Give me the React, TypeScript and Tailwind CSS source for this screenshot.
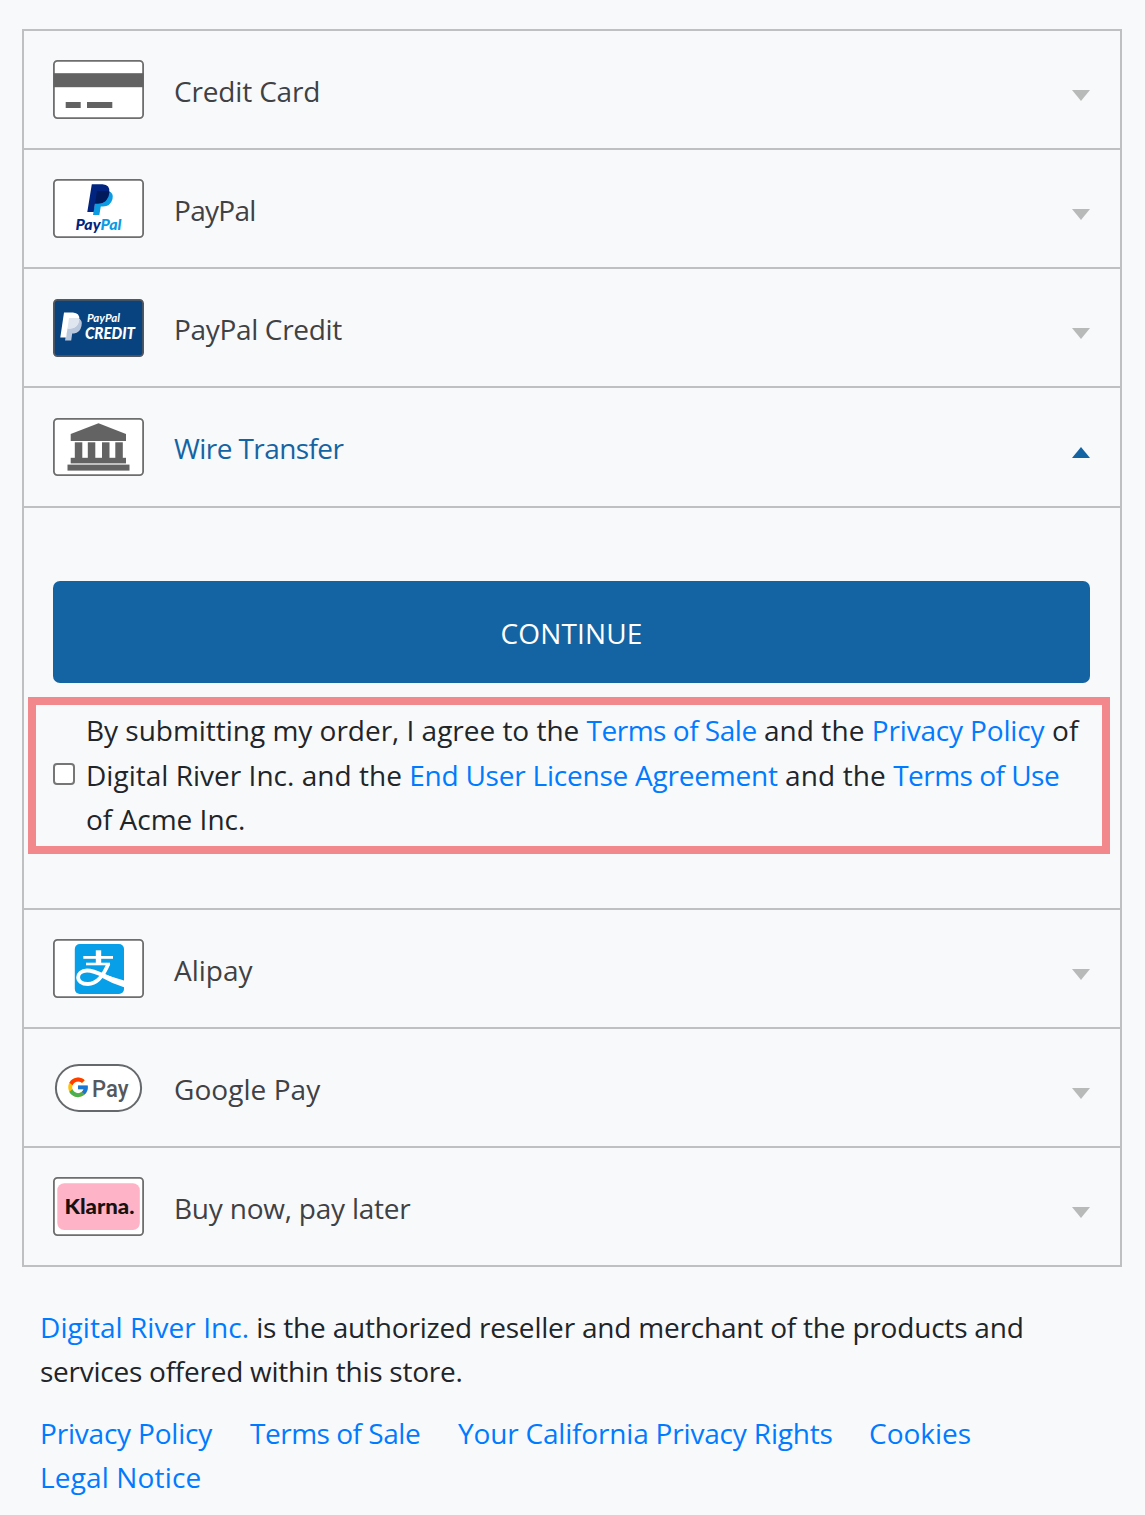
import type { ReactNode } from 'react';
import { FcGoogle } from 'react-icons/fc';

function CardFrame({ fill = '#ffffff', stroke = '#6e6e6e', h = 59, children }: { fill?: string; stroke?: string; h?: number; children: ReactNode }) {
  return (
    <svg width="91" height={h} viewBox={`0 0 91 ${h}`} className="block shrink-0">
      <rect x="0.9" y="0.9" width="89.2" height={h - 1.8} rx="3.5" fill={fill} stroke={stroke} strokeWidth="1.8" />
      {children}
    </svg>
  );
}

function CreditCardIcon() {
  return (
    <CardFrame>
      <g fill="#626262">
        <rect x="0.5" y="13.2" width="90" height="14" />
        <rect x="12.7" y="42" width="15" height="6" />
        <rect x="34" y="42" width="25.3" height="6" />
      </g>
    </CardFrame>
  );
}

function PayPalIcon() {
  return (
    <CardFrame>
      <path d="M44 12H55.5Q61 14 59.5 20Q57.5 27.5 50 27.5H47.8L46.3 36H40Z" fill="#0a9be3" />
      <path d="M38.8 5.3H49.5Q57.3 5.8 56.3 13.5Q55 24.5 45 24.5H42L40.7 33H34.3Z" fill="#00247f" />
      <path d="M44 12H55.9Q56.5 13 56.3 13.8Q54.8 24.5 45 24.5H42Z" fill="#001a5c" />
      <text x="22.5" y="51" textLength="46" lengthAdjust="spacingAndGlyphs" className="font-['Lato'] text-[14.5px] font-black italic">
        <tspan fill="#00247f">Pay</tspan>
        <tspan fill="#0a9be3">Pal</tspan>
      </text>
    </CardFrame>
  );
}

function PayPalCreditIcon() {
  return (
    <CardFrame fill="#08427f" stroke="#54585e" h={58}>
      <path d="M16 19H25Q30 21 28.5 27Q27 34 21 34.5H19.2L18.2 41.5H12Z" fill="#b9c8dc" />
      <path d="M11 13.5H20Q27 14 26.2 20.5Q25 29.5 17 29.5H14.5L13.2 38.5H7.3Z" fill="#ffffff" />
      <path d="M16 19H25.8Q26.4 20 26.2 21Q25 29.5 17 29.5H14.5Z" fill="#dfe6ef" />
      <g fill="#ffffff">
        <text x="34" y="22.5" textLength="33" lengthAdjust="spacingAndGlyphs" className="font-['Lato'] text-[11px] font-bold italic">PayPal</text>
        <text x="32" y="39.8" textLength="50" lengthAdjust="spacingAndGlyphs" className="font-['Lato'] text-[17px] font-black italic">CREDIT</text>
      </g>
    </CardFrame>
  );
}

function BankIcon() {
  return (
    <CardFrame h={58}>
      <g fill="#636363">
        <path d="M45.5 5.3L73 16V23H17.7V16Z" />
        <rect x="21.8" y="24.3" width="7.5" height="16" />
        <rect x="34.8" y="24.3" width="7.5" height="16" />
        <rect x="49" y="24.3" width="7.5" height="16" />
        <rect x="62.3" y="24.3" width="7.5" height="16" />
        <rect x="17.7" y="39.8" width="55.3" height="5.6" />
        <rect x="14.5" y="46.6" width="62" height="6" />
      </g>
    </CardFrame>
  );
}

function AlipayIcon() {
  return (
    <CardFrame>
      <rect x="21.8" y="5" width="49.2" height="50" rx="5" fill="#069fe8" />
      <g fill="none" stroke="#ffffff">
        <path d="M45.5 11.3V25" strokeWidth="5.4" />
        <path d="M30.3 18.4H60" strokeWidth="2.8" />
        <path d="M33 25H57" strokeWidth="2.6" />
        <path d="M55.5 24.5C52 33 46 45 35 45C21.5 45 22.5 31.5 34 31.5C43 31.5 50 37 60 40.5" strokeWidth="3.8" />
      </g>
      <path d="M50 34.5Q60 38.5 71 41.5V48.3Q59 44.5 48 38.2Z" fill="#ffffff" />
    </CardFrame>
  );
}

function GooglePayIcon() {
  return (
    <svg width="91" height="50" viewBox="0 0 91 50" className="block shrink-0">
      <rect x="2.9" y="1.9" width="85.2" height="46" rx="23" fill="#ffffff" stroke="#66696c" strokeWidth="2" />
      <FcGoogle x="13.3" y="12.6" size={23.5} />
      <text x="39" y="33.5" textLength="36.5" lengthAdjust="spacingAndGlyphs" fill="#55585c" className="font-['Roboto'] text-[24px] font-medium">Pay</text>
    </svg>
  );
}

function KlarnaIcon() {
  return (
    <CardFrame>
      <rect x="4.3" y="6.3" width="82.5" height="46.7" rx="7" fill="#ffb3c7" />
      <text x="11.5" y="37" textLength="70" lengthAdjust="spacingAndGlyphs" fill="#17120f" className="font-['Lato'] text-[20.5px] font-black">Klarna.</text>
    </CardFrame>
  );
}

function Method({ icon, label, tracking = '', open = false, height = 'h-[119px]' }: { icon: ReactNode; label: string; tracking?: string; open?: boolean; height?: string }) {
  return (
    <div className={`flex items-center border-b-2 border-[#bfc0c1] pr-[30px] pl-[29px] ${height} ${open ? 'text-[#1464a4]' : 'text-[#3f4144]'}`}>
      {icon}
      <span className={`grow pt-[3px] pl-[30px] ${tracking}`}>{label}</span>
      <svg width="18" height="11" viewBox="0 0 18 11" className={`block ${open ? 'mt-2.5' : 'mt-3'}`}>
        <path d={open ? 'M0 11L9 0L18 11Z' : 'M0 0H18L9 11Z'} fill={open ? '#1464a4' : '#b8b9b9'} />
      </svg>
    </div>
  );
}

function Link({ children, className = '' }: { children: ReactNode; className?: string }) {
  return <a href="#" className={`text-[#007bff] ${className}`}>{children}</a>;
}

export default function App() {
  return (
    <div className="min-h-[1515px] bg-[#f8f9fb] pt-[29px] pl-[22px] font-['Open_Sans',sans-serif] text-[28px] leading-[44.4px] text-[#212529]">
      <main className="w-[1100px] border-2 border-b-0 border-[#bfc0c1]">
        <Method icon={<CreditCardIcon />} label="Credit Card" tracking="tracking-[-0.16px]" />
        <Method icon={<PayPalIcon />} label="PayPal" tracking="tracking-[-0.7px]" />
        <Method icon={<PayPalCreditIcon />} label="PayPal Credit" tracking="tracking-[-0.33px]" />
        <Method icon={<BankIcon />} label="Wire Transfer" tracking="tracking-[-0.58px]" open height="h-[120px]" />
        <section className="h-[402px] border-b-2 border-[#bfc0c1] pt-[73px]">
          <button className="ml-[29px] block h-[102px] w-[1037px] rounded-[7px] bg-[#1464a4] pt-[3px] text-center tracking-[0.15px] text-white">CONTINUE</button>
          <div className="mt-3.5 ml-1 flex h-[157px] w-[1082px] items-center border-8 border-[#f2878c] pl-[17px]">
            <input type="checkbox" className="mt-[-3px] size-[22px] shrink-0 appearance-none rounded-[4px] border-2 border-[#767676] bg-white" />
            <p className="-mt-[1.2px] pl-[11px] whitespace-nowrap">
              <span className="tracking-[-0.02px]">By submitting my order, I agree to the </span>
              <Link className="tracking-[-0.48px]">Terms of Sale</Link>
              <span className="tracking-[0.06px]"> and the </span>
              <Link className="tracking-[-0.16px]">Privacy Policy</Link>
              <span className="tracking-[0.2px]"> of</span>
              <br />
              <span className="tracking-[0.02px]">Digital River Inc. and the </span>
              <Link className="tracking-[-0.22px]">End User License Agreement</Link>
              <span className="tracking-[0.1px]"> and the </span>
              <Link className="tracking-[-0.52px]">Terms of Use</Link>
              <br />
              of Acme Inc.
            </p>
          </div>
        </section>
        <Method icon={<AlipayIcon />} label="Alipay" />
        <Method icon={<GooglePayIcon />} label="Google Pay" tracking="tracking-[0.05px]" />
        <Method icon={<KlarnaIcon />} label="Buy now, pay later" tracking="tracking-[-0.22px]" />
      </main>
      <footer className="pt-[38px] pl-[18px]">
        <p>
          <Link className="tracking-[0.06px]">Digital River Inc.</Link>
          <span className="tracking-[-0.2px]"> is the authorized reseller and merchant of the products and<br /></span>
          <span className="tracking-[-0.25px]">services offered within this store.</span>
        </p>
        <nav className="mt-[17px] flex w-[1000px] flex-wrap">
          <Link className="w-[210px] tracking-[-0.2px]">Privacy Policy</Link>
          <Link className="w-[208px] tracking-[-0.48px]">Terms of Sale</Link>
          <Link className="w-[411px] tracking-[-0.18px]">Your California Privacy Rights</Link>
          <Link className="w-[120px]">Cookies</Link>
          <Link className="w-[211px] tracking-[0.15px]">Legal Notice</Link>
        </nav>
      </footer>
    </div>
  );
}
